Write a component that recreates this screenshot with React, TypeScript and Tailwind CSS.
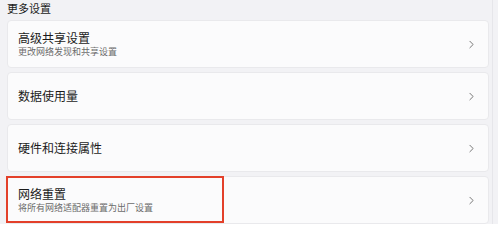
import { ChevronRight } from 'lucide-react';

interface SettingRowProps {
  title: string;
  subtitle?: string;
  highlighted?: boolean;
}

function SettingRow({ title, subtitle, highlighted }: SettingRowProps) {
  return (
    <div className="relative flex h-[48px] shrink-0 items-center rounded-[4px] border border-[#e9e9ec] bg-[#fbfbfc] pl-[10px] pr-[10px]">
      <div className="flex flex-1 flex-col justify-center">
        <div className="text-[12px] leading-[14px] text-[#1b1b1b]">{title}</div>
        {subtitle && <div className="mt-[1px] text-[9px] leading-[11px] text-[#6b6b6b]">{subtitle}</div>}
      </div>
      <ChevronRight className="h-[13px] w-[13px] text-[#5a5a5a]" strokeWidth={1.5} />
      {highlighted && (
        <div className="absolute left-[-2px] top-[-1px] h-[47px] w-[218px] border-2 border-[#e3402a]" />
      )}
    </div>
  );
}

export default function App() {
  return (
    <div
      className="relative h-[224px] w-[498px] overflow-hidden bg-[#f2f2f5] pl-[7px] pr-[9px]"
      style={{ fontFamily: '"Noto Sans CJK SC", "Noto Sans", sans-serif' }}
    >
      <div className="pt-[1px] text-[11px] leading-[15px] text-[#1b1b1b]">更多设置</div>
      <div className="mt-[4px] flex flex-col gap-[4px]">
        <SettingRow title="高级共享设置" subtitle="更改网络发现和共享设置" />
        <SettingRow title="数据使用量" />
        <SettingRow title="硬件和连接属性" />
        <SettingRow title="网络重置" subtitle="将所有网络适配器重置为出厂设置" highlighted />
      </div>
      <div className="absolute right-[5px] top-0 h-full w-px bg-[#e6e6ea]" />
    </div>
  );
}
